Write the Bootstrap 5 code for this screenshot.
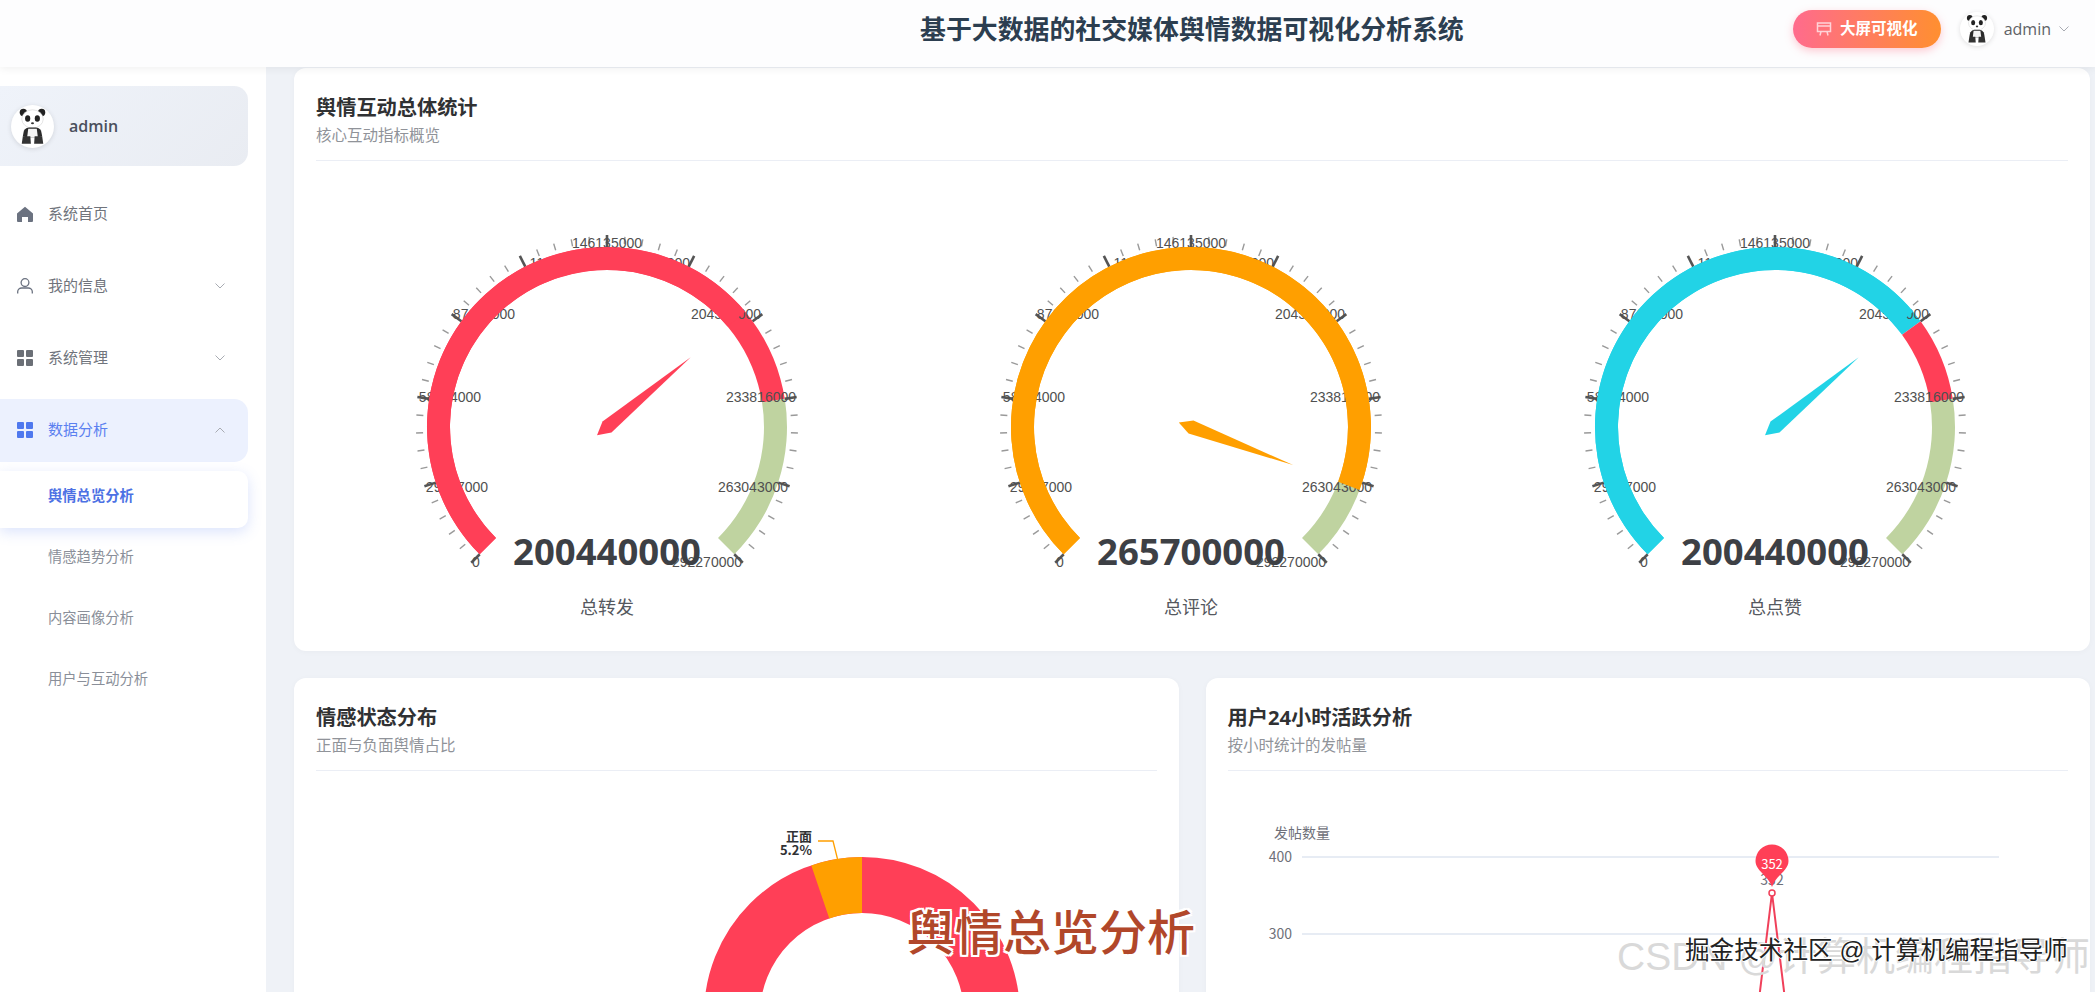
<!DOCTYPE html>
<html lang="zh-CN">
<head>
  <meta charset="UTF-8">
  <title>舆情总览分析</title>
  <link href="https://cdn.jsdelivr.net/npm/bootstrap@5.3.0/dist/css/bootstrap.min.css" rel="stylesheet">
  <style>
    body {
      height: 100vh;
      overflow: hidden;
      background: #eff2f7;
      font-family: "Open Sans", "Noto Sans CJK SC", sans-serif;
      color: #606266;
    }
    .top-bar {
      height: 67px;
      flex: none;
      padding-right: 26px;
      background: #fdfdfe;
      box-shadow: 0 2px 8px rgba(0, 0, 0, .06);
      position: relative;
      z-index: 2;
    }
    .top-title {
      margin: 0 0 9px 920px;
      font-size: 25.9px;
      font-weight: 700;
      line-height: 1.4;
      white-space: nowrap;
      color: #2c3e50;
    }
    .screen-btn {
      width: 148px;
      height: 38px;
      margin: 0 0 10px auto;
      padding: 0;
      border: 0;
      border-radius: 19px;
      color: #fff;
      font-size: 15.5px;
      font-weight: 700;
      background: linear-gradient(90deg, #ff6b8d, #ff8f30);
      box-shadow: 0 3px 9px rgba(255, 107, 129, .35);
    }
    .top-user {
      margin: 0 0 10px 19px;
      font-size: 16px;
      line-height: 1;
    }
    .top-user .name { margin-left: 10px; }
    .avatar {
      display: block;
      border-radius: 50%;
      background: #fff;
      box-shadow: 0 1px 5px rgba(0, 0, 0, .12);
    }
    .side {
      width: 266px;
      flex: none;
      padding-top: 19px;
      background: #fff;
    }
    .user-box {
      width: 248px;
      height: 80px;
      margin-bottom: 17px;
      padding-left: 11px;
      border-radius: 0 14px 14px 0;
      background: linear-gradient(135deg, #eff3fa, #e9ecf2);
      font-size: 16px;
      font-weight: 600;
      color: #4a4f5c;
    }
    .user-box .name { margin-left: 15px; }
    .side .nav-link {
      width: 248px;
      height: 63px;
      margin-bottom: 9px;
      padding: 0 23px 2px 17px;
      border-radius: 0 14px 14px 0;
      font-size: 15px;
      color: #70747c;
    }
    .side .nav-link.open {
      background: #ecf1fe;
      color: #5b80f0;
    }
    .side .nav-link .label { margin-left: 15px; }
    .side .sub-link {
      width: 248px;
      height: 56.5px;
      margin-bottom: 4.5px;
      padding: 0 0 8px 48px;
      border-radius: 0 10px 10px 0;
      font-size: 14.3px;
      color: #8a8f99;
    }
    .side .sub-link.active {
      margin-bottom: 4.5px;
      background: #fff;
      box-shadow: 0 4px 14px rgba(91, 128, 240, .22);
      color: #4c71e4;
      font-weight: 700;
    }
    .page {
      padding: 1px 5px 0 28px;
      overflow: hidden;
    }
    .panel {
      border: 0;
      border-radius: 12px;
      background: #fff;
      box-shadow: 0 1px 6px rgba(0, 0, 0, .03);
    }
    .panel .card-body { padding: 0 22px; }
    .panel-head {
      height: 93px;
      padding-top: 25px;
      border-bottom: 1px solid #ebeef5;
    }
    .panel-head h5 {
      margin: 0 0 3px;
      font-size: 20.2px;
      font-weight: 700;
      line-height: 28px;
      color: #303133;
    }
    .panel-head p {
      margin: 0;
      font-size: 15.5px;
      line-height: 22px;
      color: #909399;
    }
    .gauge-box { height: 490px; }
    .gauge-box svg, .chart-box svg { display: block; }
    .gauge-label {
      font-family: "Liberation Sans", sans-serif;
      font-size: 14px;
      fill: #505050;
    }
    .gauge-value {
      font-family: "Open Sans", sans-serif;
      font-size: 36.5px;
      font-weight: 700;
      fill: #3d4045;
    }
    .gauge-name {
      font-family: "Noto Sans CJK SC", sans-serif;
      font-size: 18px;
      fill: #55585e;
    }
    .row-second {
      --bs-gutter-x: 27px;
      margin-top: 27px;
    }
    .chart-box { height: 440px; }
    .pie-label {
      font-family: "Noto Sans CJK SC", sans-serif;
      font-size: 13px;
      font-weight: 700;
      fill: #303133;
    }
    .axis-text {
      font-family: "Noto Sans CJK SC", sans-serif;
      font-size: 14px;
      fill: #6e7079;
    }
    .mark-caption {
      position: absolute;
      left: 907px;
      top: 899px;
      font-size: 48px;
      font-weight: 500;
      line-height: 60px;
      color: #b1472a;
      text-shadow: 2px 0 #fff, -2px 0 #fff, 0 2px #fff, 0 -2px #fff, 2px 2px #fff, -2px -2px #fff, 2px -2px #fff, -2px 2px #fff;
      font-family: "Noto Sans CJK SC", sans-serif;
      white-space: nowrap;
      z-index: 5;
    }
    .mark-csdn {
      position: absolute;
      left: 1617px;
      top: 931px;
      font-family: "Liberation Sans", "Noto Sans CJK SC", sans-serif;
      font-size: 39px;
      line-height: 52px;
      color: #d9d9d9;
      white-space: nowrap;
      z-index: 5;
    }
    .mark-juejin {
      position: absolute;
      left: 1685px;
      top: 934px;
      font-family: "Liberation Sans", "Noto Sans CJK SC", sans-serif;
      font-size: 24.6px;
      line-height: 34px;
      color: #222;
      text-shadow: 1px 0 #fff, -1px 0 #fff, 0 1px #fff, 0 -1px #fff;
      white-space: nowrap;
      z-index: 6;
    }
  </style>
</head>
<body class="d-flex flex-column">
  <svg width="0" height="0" class="position-absolute">
    <symbol id="panda" viewBox="0 0 40 40">
      <circle cx="11.500" cy="7" r="3.400" fill="#222"/>
      <circle cx="28.500" cy="7" r="3.400" fill="#222"/>
      <ellipse cx="20" cy="13" rx="10" ry="8.500" fill="#fff" stroke="#ccc" stroke-width=".5"/>
      <ellipse cx="15.500" cy="12.500" rx="2.400" ry="3" fill="#222"/>
      <ellipse cx="24.500" cy="12.500" rx="2.400" ry="3" fill="#222"/>
      <ellipse cx="20" cy="17" rx="1.400" ry="1" fill="#333"/>
      <path d="M11 29 12 24Q14 21 17 21L23 21Q26 21 28 24L29 29 26 30 14 30Z" fill="#2b2b2b"/>
      <path d="M16 22 24 22 25 30 15 30Z" fill="#f4f4f4"/>
      <path d="M10 36 11 29 18 29 18.500 36ZM21.500 36 22 29 29 29 30 36Z" fill="#333"/>
    </symbol>
    <symbol id="grid" viewBox="0 0 16 16">
      <rect x="0" y="0" width="7" height="7" rx="1" fill="currentColor"/>
      <rect x="9" y="0" width="7" height="7" rx="1" fill="currentColor"/>
      <rect x="0" y="9" width="7" height="7" rx="1" fill="currentColor"/>
      <rect x="9" y="9" width="7" height="7" rx="1" fill="currentColor"/>
    </symbol>
    <symbol id="chev" viewBox="0 0 10 6">
      <path d="M.5.5 5 5 9.500.5" fill="none" stroke="currentColor" stroke-width="1"/>
    </symbol>
  </svg>

  <header class="top-bar d-flex align-items-center">
    <h1 class="top-title">基于大数据的社交媒体舆情数据可视化分析系统</h1>
    <button class="screen-btn d-flex align-items-center justify-content-center gap-2">
      <svg width="16" height="16" viewBox="0 0 16 16" fill="none" stroke="#ffd3d8" stroke-width="1.500">
        <path d="M1.500 2h13v8.500h-13zM1.500 5h13M5 10.500 4 14.500M11 10.500l1 4"/>
      </svg>
      <span>大屏可视化</span>
    </button>
    <div class="top-user d-flex align-items-center">
      <svg class="avatar" width="34" height="34"><use href="#panda"/></svg>
      <span class="name">admin</span>
      <svg class="ms-2" width="10" height="6" style="color:#a8abb2"><use href="#chev"/></svg>
    </div>
  </header>

  <div class="d-flex flex-grow-1 overflow-hidden">
    <aside class="side">
      <div class="user-box d-flex align-items-center">
        <svg class="avatar" width="43" height="43"><use href="#panda"/></svg>
        <span class="name">admin</span>
      </div>
      <nav class="nav flex-column">
        <a class="nav-link d-flex align-items-center" href="#">
          <svg width="16" height="16" viewBox="0 0 16 16" fill="#6b7280"><path d="M8 .8 16 7.600V15a1 1 0 0 1-1 1h-4v-5H5v5H1a1 1 0 0 1-1-1V7.600Z"/></svg>
          <span class="label">系统首页</span>
        </a>
        <a class="nav-link d-flex align-items-center" href="#">
          <svg width="16" height="16" viewBox="0 0 16 16" fill="none" stroke="#6b7280" stroke-width="1.300"><circle cx="8" cy="4.600" r="3.900"/><path d="M.7 15.500v-1.700c0-2.400 2-3.800 4-3.800h6.600c2 0 4 1.400 4 3.800v1.700"/></svg>
          <span class="label">我的信息</span>
          <svg class="ms-auto" width="10" height="6" style="color:#a8abb2"><use href="#chev"/></svg>
        </a>
        <a class="nav-link d-flex align-items-center" href="#">
          <svg width="16" height="16" style="color:#6b6f76"><use href="#grid"/></svg>
          <span class="label">系统管理</span>
          <svg class="ms-auto" width="10" height="6" style="color:#a8abb2"><use href="#chev"/></svg>
        </a>
        <a class="nav-link open d-flex align-items-center" href="#">
          <svg width="16" height="16" style="color:#4f78ee"><use href="#grid"/></svg>
          <span class="label">数据分析</span>
          <svg class="ms-auto" width="10" height="6" style="color:#a8abb2;transform:scaleY(-1)"><use href="#chev"/></svg>
        </a>
        <a class="nav-link sub-link active d-flex align-items-center" href="#">舆情总览分析</a>
        <a class="nav-link sub-link d-flex align-items-center" href="#">情感趋势分析</a>
        <a class="nav-link sub-link d-flex align-items-center" href="#">内容画像分析</a>
        <a class="nav-link sub-link d-flex align-items-center" href="#">用户与互动分析</a>
      </nav>
    </aside>

    <main class="page flex-grow-1">
      <div class="card panel">
        <div class="card-body">
          <div class="panel-head">
            <h5>舆情互动总体统计</h5>
            <p>核心互动指标概览</p>
          </div>
          <div class="row g-0" id="gauges"></div>
        </div>
      </div>

      <div class="row row-second">
        <div class="col-6">
          <div class="card panel">
            <div class="card-body">
              <div class="panel-head">
                <h5>情感状态分布</h5>
                <p>正面与负面舆情占比</p>
              </div>
              <div class="chart-box">
                <svg width="100%" height="440">
                  <g transform="translate(546 244)">
                    <circle r="130" fill="none" stroke="#ff3f57" stroke-width="56"/>
                    <path d="M0-158A158 158 0 0 0-50.700-149.600L-32.700-96.600A102 102 0 0 1 0-102Z" fill="#ff9f00"/>
                  </g>
                  <path d="M502 70H517L521.500 88" fill="none" stroke="#ff9f00" stroke-width="1.300"/>
                  <text class="pie-label" x="496" y="70" text-anchor="end">正面</text>
                  <text class="pie-label" x="496" y="84" text-anchor="end">5.2%</text>
                </svg>
              </div>
            </div>
          </div>
        </div>
        <div class="col-6">
          <div class="card panel">
            <div class="card-body">
              <div class="panel-head">
                <h5>用户24小时活跃分析</h5>
                <p>按小时统计的发帖量</p>
              </div>
              <div class="chart-box">
                <svg width="100%" height="440">
                  <text class="axis-text" x="74" y="67" text-anchor="middle">发帖数量</text>
                  <text class="axis-text" x="64" y="91" text-anchor="end">400</text>
                  <text class="axis-text" x="64" y="168" text-anchor="end">300</text>
                  <path d="M74 86H771M74 163H771" stroke="#e0e6f1" stroke-width="1.500"/>
                  <path d="M510 400 544 122 578 400" fill="none" stroke="#f0405a" stroke-width="2"/>
                  <circle cx="544" cy="122" r="3" fill="#fff" stroke="#f0405a" stroke-width="1.500"/>
                  <text class="axis-text" x="544" y="114" text-anchor="middle">352</text>
                  <path d="M544 116C540 104 527.500 100 527.500 90A16.500 16.500 0 1 1 560.500 90C560.500 100 548 104 544 116Z" fill="#ff3f57"/>
                  <text class="axis-text" x="544" y="98" text-anchor="middle" style="fill:#fff;font-size:13px">352</text>
                </svg>
              </div>
            </div>
          </div>
        </div>
      </div>
    </main>
  </div>

  <div class="mark-caption">舆情总览分析</div>
  <div class="mark-csdn">CSDN @计算机编程指导师</div>
  <div class="mark-juejin">掘金技术社区 @ 计算机编程指导师</div>

  <script src="https://cdn.jsdelivr.net/npm/bootstrap@5.3.0/dist/js/bootstrap.bundle.min.js"></script>
  <script>
    const RED = '#ff3f57', GREEN = '#bfd3a0', ORANGE = '#ff9f00', CYAN = '#22d3e6';
    const MAX = 292270000;
    const OFFSETS = [[-131,135],[-150,60],[-157,-30],[-123,-113],[-43,-164],[0,-184],[48,-164],[119,-113],[154,-30],[146,60],[100,135]];

    // stops sit under the labels, the value arc covers them
    const gauges = [
      { name: '总转发', value: 200440000, color: RED, stops: [[0.8, RED], [1, GREEN]] },
      { name: '总评论', value: 265700000, color: ORANGE, stops: [[0.9, ORANGE], [1, GREEN]] },
      { name: '总点赞', value: 200440000, color: CYAN, stops: [[0.7, CYAN], [0.8, RED], [1, GREEN]] }
    ];

    function point(r, deg) {
      const a = deg * Math.PI / 180;
      return [r * Math.cos(a), -r * Math.sin(a)];
    }

    function arcPath(r1, r2, from, to) {
      const a = 225 - from * 270, b = 225 - to * 270;
      const large = (a - b) > 180 ? 1 : 0;
      const p1 = point(r1, a), p2 = point(r1, b), p3 = point(r2, b), p4 = point(r2, a);
      return `M${p1}A${r1} ${r1} 0 ${large} 1 ${p2}L${p3}A${r2} ${r2} 0 ${large} 0 ${p4}Z`;
    }

    function gaugeSvg(g) {
      let html = '';
      let start = 0;
      g.stops.forEach(s => {
        html += `<path d="${arcPath(180, 157, start, s[0])}" fill="${s[1]}"/>`;
        start = s[0];
      });
      for (let i = 0; i <= 50; i++) {
        const deg = 225 - i * 5.4;
        const major = i % 5 === 0;
        const a = point(major ? 180 : 184, deg), b = point(major ? 192 : 191, deg);
        html += `<line x1="${a[0]}" y1="${a[1]}" x2="${b[0]}" y2="${b[1]}" stroke="${major ? '#555' : '#999'}" stroke-width="${major ? 2.6 : 1.4}"/>`;
      }
      OFFSETS.forEach((o, i) => {
        html += `<text class="gauge-label" x="${o[0]}" y="${o[1]}" text-anchor="middle" dominant-baseline="central">${MAX / 10 * i}</text>`;
      });
      html += `<path d="${arcPath(180, 157, 0, g.value / MAX)}" fill="${g.color}"/>`;
      const deg = 225 - g.value / MAX * 270;
      html += `<polygon points="109,0 0,7 -13,0 0,-7" fill="${g.color}" transform="rotate(${-deg})"/>`;
      html += `<text class="gauge-value" y="124" text-anchor="middle" dominant-baseline="central">${g.value}</text>`;
      html += `<text class="gauge-name" y="179" text-anchor="middle" dominant-baseline="central">${g.name}</text>`;
      return `<svg width="100%" height="490"><g transform="translate(291 266)">${html}</g></svg>`;
    }

    document.getElementById('gauges').innerHTML = gauges
      .map(g => `<div class="col-4 gauge-box">${gaugeSvg(g)}</div>`)
      .join('');
  </script>
</body>
</html>
